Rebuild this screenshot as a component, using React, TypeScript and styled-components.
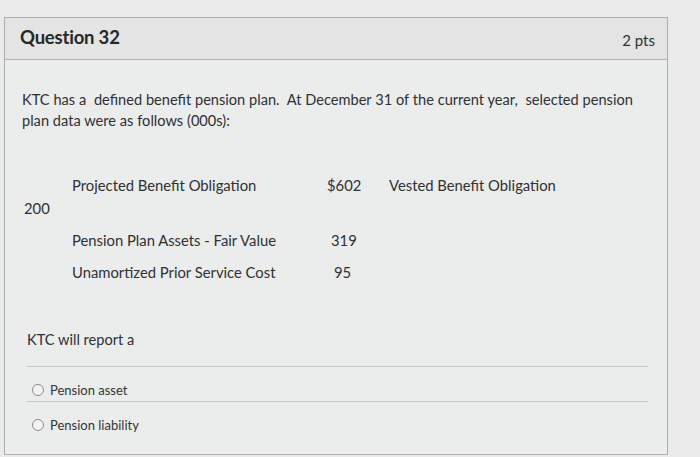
import React from "react";
import styled, { createGlobalStyle } from "styled-components";

const Global = createGlobalStyle`
  html, body { margin: 0; padding: 0; background: #e8e9e8; }
  body { font-family: Lato, "Open Sans", sans-serif; color: #2f3133; }
  #root { width: 700px; height: 457px; overflow: hidden; }
`;

const Page = styled.div`
  width: 700px;
  height: 457px;
  padding: 17px 0 0 4px;
  box-sizing: border-box;
  background: #e9eae9;
`;

const Card = styled.div`
  width: 664px;
  height: 438px;
  box-sizing: border-box;
  border: 1px solid #adafae;
  background: #ebecec;
  display: flex;
  flex-direction: column;
`;

const Header = styled.div`
  height: 42px;
  box-sizing: border-box;
  border-bottom: 1px solid #b0b2b1;
  background: #e3e4e3;
  display: flex;
  align-items: center;
  justify-content: space-between;
  padding: 0 12px 0 15px;
`;

const Title = styled.h2`
  margin: 0 0 4px;
  font-size: 18.5px;
  font-weight: 700;
  color: #262829;
  letter-spacing: -0.2px;
`;

const Points = styled.span`
  font-size: 15px;
  color: #2f3133;
  margin-top: 2px;
`;

const Body = styled.div`
  padding: 29px 20px 0 17px;
  display: flex;
  flex-direction: column;
`;

const Para = styled.p`
  margin: 0;
  font-size: 14.6px;
  line-height: 21px;
  width: 620px;
  word-spacing: 0.1px;
`;

const DataBlock = styled.div`
  margin-top: 44px;
  font-size: 14.8px;
  line-height: 21px;
  display: flex;
  flex-direction: column;
`;

const Row = styled.div<{ $gap?: number }>`
  display: flex;
  margin-top: ${(p) => p.$gap ?? 0}px;
`;

const Label = styled.span`
  width: 255px;
  padding-left: 50px;
`;

const Value = styled.span<{ $indent?: number }>`
  width: 62px;
  padding-left: ${(p) => p.$indent ?? 0}px;
  box-sizing: border-box;
`;

const Extra = styled.span``;

const Wrapped = styled.div`
  margin-top: 2px;
  padding-left: 2px;
`;

const Prompt = styled.p`
  margin: 46px 0 0 5px;
  font-size: 14.6px;
  line-height: 21px;
`;

const Answers = styled.div`
  margin: 16px 0 0 5px;
  width: 621px;
`;

const Answer = styled.label`
  display: flex;
  align-items: flex-start;
  gap: 6px;
  height: 35px;
  box-sizing: border-box;
  border-top: 1px solid #c5c7c6;
  padding: 15px 0 0 5px;
  font-size: 13px;
  line-height: 17px;
  color: #333536;
`;

const Radio = styled.span`
  width: 10px;
  height: 10px;
  margin-top: 2px;
  border-radius: 50%;
  border: 1px solid #8a8c8c;
  background: #f3f3f3;
  flex: none;
`;

export default function App() {
  return (
    <>
      <Global />
      <Page>
        <Card>
          <Header>
            <Title>Question 32</Title>
            <Points>2 pts</Points>
          </Header>
          <Body>
            <Para>
              KTC has a&nbsp; defined benefit pension plan.&nbsp; At December 31 of the current year,&nbsp; selected pension plan data were as follows (000s):
            </Para>
            <DataBlock>
              <Row>
                <Label>Projected Benefit Obligation</Label>
                <Value>$602</Value>
                <Extra>Vested Benefit Obligation</Extra>
              </Row>
              <Wrapped>200</Wrapped>
              <Row $gap={11}>
                <Label>Pension Plan Assets - Fair Value</Label>
                <Value $indent={4}>319</Value>
              </Row>
              <Row $gap={11}>
                <Label>Unamortized Prior Service Cost</Label>
                <Value $indent={7}>95</Value>
              </Row>
            </DataBlock>
            <Prompt>KTC will report a</Prompt>
            <Answers>
              <Answer>
                <Radio />
                Pension asset
              </Answer>
              <Answer>
                <Radio />
                Pension liability
              </Answer>
            </Answers>
          </Body>
        </Card>
      </Page>
    </>
  );
}
